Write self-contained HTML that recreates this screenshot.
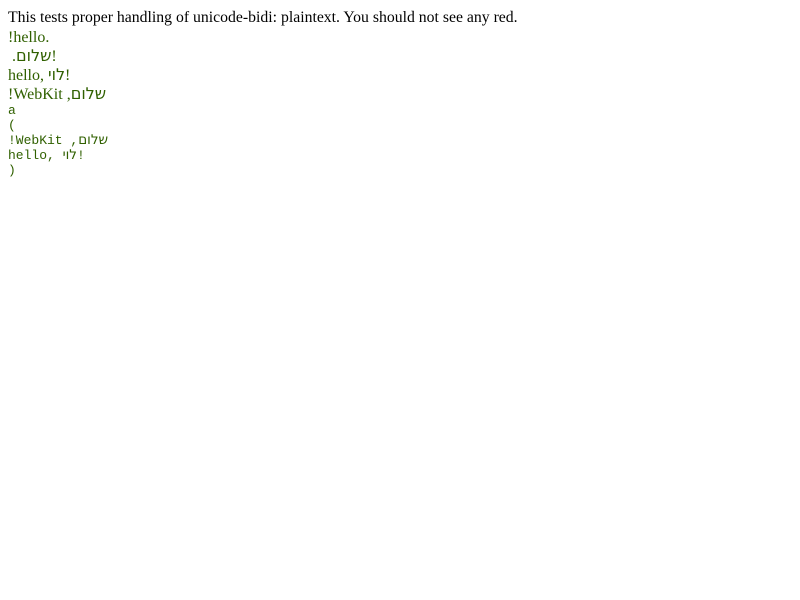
<!DOCTYPE html>
<html><head><meta charset="utf-8"><style>
body{margin:8px;font-family:"Liberation Serif",serif;font-size:16px;color:#000;background:#fff}
p{margin:0;line-height:19px;height:19px;overflow:visible}
.s{color:#306000;white-space:pre}
.m{font-family:"Liberation Mono","DejaVu Sans Mono",monospace;font-size:13px;line-height:15px;height:15px;color:#306000;white-space:pre;margin:0}
.h{font-family:"DejaVu Sans",sans-serif;line-height:0}
.hm{font-family:"DejaVu Sans",sans-serif;font-size:13.5px;line-height:0}
</style></head><body>
<p style="font-size:15.75px;height:20px">This tests proper handling of unicode-bidi: plaintext. You should not see any red.</p>
<p class="s"><bdo dir="ltr">!hello.</bdo></p>
<p class="s"><bdo dir="ltr"> .<span class="h">םולש</span>!</bdo></p>
<p class="s"><bdo dir="ltr">hello, <span class="h">יול</span>!</bdo></p>
<p class="s" style="height:18px"><bdo dir="ltr">!WebKit ,<span class="h">םולש</span></bdo></p>
<div class="m">a</div>
<div class="m">(</div>
<div class="m"><bdo dir="ltr">!WebKit ,<span class="hm">םולש</span></bdo></div>
<div class="m"><bdo dir="ltr">hello, <span class="hm">יול</span>!</bdo></div>
<div class="m">)</div>
</body></html>
